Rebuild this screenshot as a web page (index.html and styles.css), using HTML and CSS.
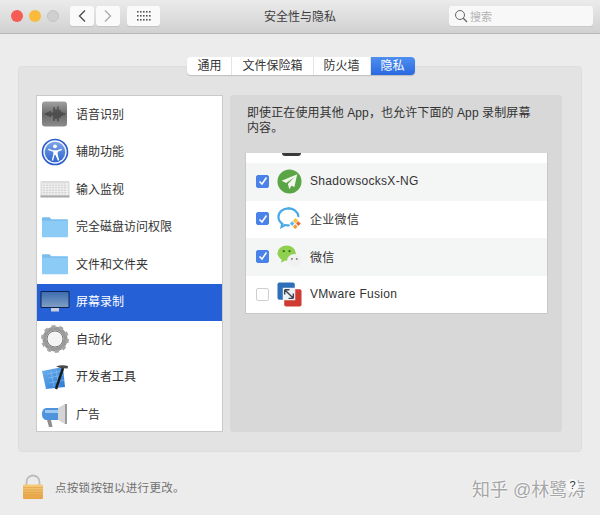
FILE: index.html
```html
<!DOCTYPE html>
<html lang="zh">
<head>
<meta charset="utf-8">
<title>安全性与隐私</title>
<link rel="stylesheet" href="styles.css">
</head>
<body>
<div class="window">
  <header class="titlebar">
    <div class="lights">
      <span class="light red"></span><span class="light yellow"></span><span class="light grey"></span>
    </div>
    <div class="navgroup">
      <button class="tbtn nav"><svg width="10" height="14" viewBox="0 0 10 14"><path d="M8 1.500 2.500 7 8 12.500" fill="none" stroke="#4a4a4a" stroke-width="1.300"/></svg></button>
      <button class="tbtn nav"><svg width="10" height="14" viewBox="0 0 10 14"><path d="M2 1.500 7.500 7 2 12.500" fill="none" stroke="#a8a8a8" stroke-width="1.300"/></svg></button>
    </div>
    <button class="tbtn grid"><svg width="14" height="10" viewBox="0 0 14 10"><g fill="#555"><rect x="0" y="0" width="1.600" height="1.600"/><rect x="3" y="0" width="1.600" height="1.600"/><rect x="6" y="0" width="1.600" height="1.600"/><rect x="9" y="0" width="1.600" height="1.600"/><rect x="12" y="0" width="1.600" height="1.600"/><rect x="0" y="4" width="1.600" height="1.600"/><rect x="3" y="4" width="1.600" height="1.600"/><rect x="6" y="4" width="1.600" height="1.600"/><rect x="9" y="4" width="1.600" height="1.600"/><rect x="12" y="4" width="1.600" height="1.600"/><rect x="0" y="8" width="1.600" height="1.600"/><rect x="3" y="8" width="1.600" height="1.600"/><rect x="6" y="8" width="1.600" height="1.600"/><rect x="9" y="8" width="1.600" height="1.600"/><rect x="12" y="8" width="1.600" height="1.600"/></g></svg></button>
    <div class="title">安全性与隐私</div>
    <div class="search">
      <svg width="14" height="14" viewBox="0 0 14 14"><circle cx="6" cy="6" r="4.500" fill="none" stroke="#666" stroke-width="1"/><path d="M9.300 9.300 13 13" stroke="#666" stroke-width="1.300"/></svg>
      <span>搜索</span>
    </div>
  </header>

  <main class="content">
    <nav class="tabs">
      <span class="tab">通用</span><span class="tab">文件保险箱</span><span class="tab">防火墙</span><span class="tab active">隐私</span>
    </nav>
    <section class="panel">
      <ul class="sidebar">
        <li class="side-row">
          <svg class="side-icon" viewBox="0 0 30 28"><defs><linearGradient id="sp" x1="0" y1="0" x2="0" y2="1"><stop offset="0" stop-color="#a2a2a2"/><stop offset=".5" stop-color="#6a6a6a"/><stop offset="1" stop-color="#8c8c8c"/></linearGradient></defs><rect x="2" y="1.500" width="25" height="25" rx="3" fill="url(#sp)"/><path d="M6 13v2M8 12v4M10 11v6M12 12.500v3M14 7v14M16 9v10M18 6.500v15M20 10v8M22 12v4M24 13v2" stroke="#222" stroke-width=".8" fill="none"/></svg>
          <span class="side-label">语音识别</span>
        </li>
        <li class="side-row">
          <svg class="side-icon" viewBox="0 0 28 28"><defs><linearGradient id="ac" x1="0" y1="0" x2="0" y2="1"><stop offset="0" stop-color="#7ea6e8"/><stop offset="1" stop-color="#2f63cf"/></linearGradient></defs><circle cx="14" cy="14" r="13.300" fill="#2a5ccb"/><circle cx="14" cy="14" r="11.700" fill="#f2f5fb"/><circle cx="14" cy="14" r="10.300" fill="url(#ac)"/><circle cx="14" cy="8.300" r="1.900" fill="#fff"/><path d="M7.500 10.800 12 12.200h4l4.500-1.400.4 1.200-4.200 1.700v3l1.600 5.600-1.400.4L14.500 17h-1l-1.400 5.700-1.400-.4 1.600-5.600v-3L7.100 12z" fill="#fff"/></svg>
          <span class="side-label">辅助功能</span>
        </li>
        <li class="side-row">
          <svg class="side-icon" viewBox="0 0 30 28"><rect x="0.500" y="6" width="29" height="16" rx="1" fill="#dcdcdc"/><rect x="0.500" y="20.500" width="29" height="2" fill="#a9a9a9"/><path d="M2 9h26M2 11.500h26M2 14h26M2 16.500h26M2 19h26" stroke="#f7f7f7" stroke-width="1.600"/><path d="M4 8v12M7 8v12M10 8v12M13 8v12M16 8v12M19 8v12M22 8v12M25 8v12" stroke="#bdbdbd" stroke-width=".5"/></svg>
          <span class="side-label">输入监视</span>
        </li>
        <li class="side-row">
          <svg class="side-icon" viewBox="0 0 28 28"><path d="M1 5.500c0-.8.400-1.200 1.200-1.200h6.300l1.800 2h15.500c.8 0 1.200.4 1.200 1.200V8H1z" fill="#79bdee"/><path d="M1 7.800h26v15.500c0 .6-.4 1-1 1H2c-.6 0-1-.4-1-1z" fill="#8ccbf5"/></svg>
          <span class="side-label">完全磁盘访问权限</span>
        </li>
        <li class="side-row">
          <svg class="side-icon" viewBox="0 0 28 28"><path d="M1 5.500c0-.8.400-1.200 1.200-1.200h6.300l1.800 2h15.500c.8 0 1.200.4 1.200 1.200V8H1z" fill="#79bdee"/><path d="M1 7.800h26v15.500c0 .6-.4 1-1 1H2c-.6 0-1-.4-1-1z" fill="#8ccbf5"/></svg>
          <span class="side-label">文件和文件夹</span>
        </li>
        <li class="side-row selected">
          <svg class="side-icon" viewBox="0 0 30 28"><defs><linearGradient id="sc" x1="0" y1="0" x2="0" y2="1"><stop offset="0" stop-color="#3e6db0"/><stop offset="1" stop-color="#7e9ec4"/></linearGradient></defs><rect x="0.500" y="3" width="29" height="17" rx="1" fill="#10244d"/><rect x="1.500" y="4" width="27" height="15" fill="url(#sc)"/><rect x="11" y="20" width="8" height="3.500" fill="#c5cfde"/></svg>
          <span class="side-label">屏幕录制</span>
        </li>
        <li class="side-row">
          <svg class="side-icon" viewBox="0 0 28 28"><circle cx="14" cy="14" r="10.500" fill="none" stroke="#999" stroke-width="4"/><circle cx="14" cy="14" r="12.500" fill="none" stroke="#a6a6a6" stroke-width="3" stroke-dasharray="3.900 3.960"/><circle cx="14" cy="14" r="8" fill="#f4f4f4" stroke="#777" stroke-width="1"/></svg>
          <span class="side-label">自动化</span>
        </li>
        <li class="side-row">
          <svg class="side-icon" viewBox="0 0 28 28"><defs><linearGradient id="xc" x1="0" y1="0" x2="1" y2="1"><stop offset="0" stop-color="#6fb4ee"/><stop offset="1" stop-color="#2b78d4"/></linearGradient></defs><path d="M1 8 22 4 24 24 5 26z" fill="url(#xc)"/><path d="M6 11 21 8M7 15 22 12M8 20 23 17M10 8 13 24M15 7 18 24" stroke="#9ccdf3" stroke-width=".5"/><path d="M22 5 15 26" stroke="#1b1b1b" stroke-width="2.400"/><path d="M15 3.500C19 2 23 2 27 3l-.4 2.500-7-.6z" fill="#4a4a4a"/></svg>
          <span class="side-label">开发者工具</span>
        </li>
        <li class="side-row">
          <svg class="side-icon" viewBox="0 0 28 28"><path d="M6 20l2 7h3.500L10 20z" fill="#8d8d8d"/><path d="M17 8 24 4v20l-7-4z" fill="#d4d4d4"/><path d="M24 4h2v20h-2z" fill="#9a9a9a"/><path d="M17 8H6c-3 0-5 2-5 6s2 6 5 6h11z" fill="#4e93dc"/><path d="M4 10h13v3H4z" fill="#9dc8ef"/></svg>
          <span class="side-label">广告</span>
        </li>
      </ul>

      <div class="detail">
        <p class="desc">即使正在使用其他 App，也允许下面的 App 录制屏幕内容。</p>
        <ul class="apps">
          <li class="app-clip"><span class="clip-mark"></span></li>
          <li class="app-row alt">
            <span class="check on"><svg width="10" height="10" viewBox="0 0 10 10"><path d="M1.500 5.500 4 8l4.500-6.500" fill="none" stroke="#fff" stroke-width="1.500"/></svg></span>
            <svg class="app-icon" viewBox="0 0 26 26"><circle cx="13" cy="13" r="12.500" fill="#5aa546"/><path d="M21 5.500 4.800 12.300l4.700 2.300L18 8.500l-6.700 7.200 1.500 5.300 2.300-3.600 3 1.300z" fill="#f2f8ee"/></svg>
            <span class="app-name">ShadowsocksX-NG</span>
          </li>
          <li class="app-row">
            <span class="check on"><svg width="10" height="10" viewBox="0 0 10 10"><path d="M1.500 5.500 4 8l4.500-6.500" fill="none" stroke="#fff" stroke-width="1.500"/></svg></span>
            <svg class="app-icon" viewBox="0 0 26 26"><path d="M12 2.500C6 2.500 1.500 6.500 1.500 11.500c0 3 1.600 5.400 4 7l-.8 3.300 3.800-2c1.200.4 2.400.5 3.700.4" fill="none" stroke="#47a9e6" stroke-width="2.300" stroke-linecap="round"/><path d="M12 2.500c5.500 0 9.500 3.500 10.200 8" fill="none" stroke="#47a9e6" stroke-width="2.300" stroke-linecap="round"/><rect x="17.300" y="13.300" width="4" height="4" transform="rotate(45 19.300 15.300)" fill="#f5c542"/><rect x="20.500" y="16.500" width="3.500" height="3.500" transform="rotate(45 22.250 18.250)" fill="#e8673a"/><rect x="14" y="16.500" width="3.500" height="3.500" transform="rotate(45 15.750 18.250)" fill="#5fb8e8"/><rect x="17.300" y="19.800" width="3.500" height="3.500" transform="rotate(45 19 21.500)" fill="#f09a3a"/></svg>
            <span class="app-name">企业微信</span>
          </li>
          <li class="app-row alt">
            <span class="check on"><svg width="10" height="10" viewBox="0 0 10 10"><path d="M1.500 5.500 4 8l4.500-6.500" fill="none" stroke="#fff" stroke-width="1.500"/></svg></span>
            <svg class="app-icon" viewBox="0 0 26 26"><ellipse cx="10" cy="9.500" rx="9.500" ry="8" fill="#8fd14f"/><path d="M5 15.500 4.300 19.500l4.500-2.700z" fill="#8fd14f"/><circle cx="7" cy="7.500" r="1.200" fill="#3f6b1c"/><circle cx="13" cy="7.500" r="1.200" fill="#3f6b1c"/><ellipse cx="18" cy="17" rx="7.500" ry="6.500" fill="#f1f1f1"/><path d="M21 22l2 2.500-.2-4z" fill="#f1f1f1"/><circle cx="15.500" cy="15.500" r="1" fill="#777"/><circle cx="20.500" cy="15.500" r="1" fill="#777"/></svg>
            <span class="app-name">微信</span>
          </li>
          <li class="app-row">
            <span class="check"></span>
            <svg class="app-icon" viewBox="0 0 26 26"><rect x="0.500" y="0.500" width="18" height="18" rx="2" fill="#2e6fb8"/><rect x="7.500" y="7.500" width="18" height="18" rx="2" fill="#cf3a32"/><rect x="6" y="6" width="13" height="13" fill="#eef1f5"/><path d="M8 8l9 9M8 8h5M8 8v5M17 17h-5M17 17v-5" stroke="#3f4652" stroke-width="1.500" fill="none"/></svg>
            <span class="app-name">VMware Fusion</span>
          </li>
        </ul>
      </div>
    </section>
    <footer class="footer">
      <svg class="lock" width="20" height="26" viewBox="0 0 20 26"><defs><linearGradient id="lk" x1="0" y1="0" x2="0" y2="1"><stop offset="0" stop-color="#f5cd7c"/><stop offset="1" stop-color="#e8a243"/></linearGradient></defs><path d="M3.500 11V8a6.500 6.500 0 0 1 13 0v3" fill="none" stroke="#bdbdbd" stroke-width="1.800"/><rect x="0" y="10.500" width="20" height="14.500" rx="1" fill="url(#lk)"/><path d="M0 13.500h20M0 16h20M0 18.500h20M0 21h20" stroke="#dd9f45" stroke-width=".6"/></svg>
      <span class="lock-text">点按锁按钮以进行更改。</span>
    </footer>
    <div class="watermark">知乎 @林鹭涛</div>
    <div class="help">?</div>
  </main>
</div>
</body>
</html>
```

FILE: styles.css
```css
* { box-sizing: border-box; }
html, body { margin: 0; padding: 0; }
body {
  width: 600px;
  height: 515px;
  overflow: hidden;
  font-family: "Liberation Sans", "Noto Sans CJK SC", sans-serif;
  font-size: 12px;
  color: #3a3a3a;
  background: #ececec;
}
ul { list-style: none; margin: 0; padding: 0; }
p { margin: 0; }

.window { display: flex; flex-direction: column; height: 515px; }

.titlebar {
  height: 34px;
  flex: none;
  display: flex;
  align-items: center;
  padding: 0 7px 1px 11px;
  background: linear-gradient(#ebebeb, #d1d1d1);
  border-bottom: 1px solid #b8b8b8;
  position: relative;
}
.lights { display: flex; gap: 6px; margin-right: 11px; }
.light { width: 12px; height: 12px; border-radius: 50%; }
.red { background: #f45c54; }
.yellow { background: #f8bb3b; }
.grey { background: #cfcfcf; border: 1px solid #c4c4c4; }

.navgroup { display: flex; gap: 2px; margin-right: 7px; }
.tbtn {
  height: 20px;
  border: 0;
  padding: 0;
  border-radius: 3px;
  background: #fafafa;
  box-shadow: 0 1px 0 #c4c4c4;
  display: flex;
  align-items: center;
  justify-content: center;
}
.nav { width: 24px; }
.grid { width: 33px; }
.title {
  position: absolute;
  left: 264px;
  top: 8px;
  font-size: 12px;
  line-height: 18px;
  color: #3e3e3e;
}
.search {
  margin-left: auto;
  width: 144px;
  height: 20px;
  background: #f8f8f8;
  border-radius: 3px;
  box-shadow: 0 1px 0 #c9c9c9;
  display: flex;
  align-items: center;
  gap: 2px;
  padding-left: 5px;
  font-size: 11px;
  color: #b4b4b4;
}

.content {
  flex: 1;
  position: relative;
  padding: 23px 18px 0;
  display: flex;
  flex-direction: column;
}
.tabs {
  display: flex;
  align-self: center;
  height: 18px;
  margin-bottom: -9px;
  margin-left: 2px;
  position: relative;
  z-index: 1;
  border-radius: 4px;
  background: #fff;
  box-shadow: 0 1px 1px #bdbdbd;
}
.tab {
  line-height: 18px;
  padding: 0 10px;
  color: #333;
  border-right: 1px solid #e4e4e4;
}
.tab.active {
  background: linear-gradient(#4f8ff0, #2a69e0);
  color: #fff;
  border-right: 0;
  border-radius: 0 4px 4px 0;
}

.panel {
  height: 386px;
  background: #e3e3e3;
  border: 1px solid #dedede;
  border-radius: 4px;
  padding: 28px 19px 19px 17px;
  display: flex;
  gap: 7px;
}
.sidebar {
  width: 187px;
  background: #fff;
  border: 1px solid #c9c9c9;
  flex: none;
}
.side-row {
  height: 37.5px;
  display: flex;
  align-items: center;
  gap: 6px;
  padding: 0 0 1px 3px;
  color: #333;
}
.side-icon { width: 30px; height: 28px; flex: none; }
.side-label { padding-bottom: 2px; }
.selected { background: #2560d7; color: #fff; }

.detail {
  flex: 1;
  background: #d8d8d8;
  border-radius: 3px;
  padding: 11px 14px 0 15px;
}
.desc { line-height: 15px; width: 290px; padding-left: 2px; color: #333; margin-bottom: 17px; letter-spacing: .1px; }
.apps {
  background: #fff;
  border: 1px solid #c8c8c8;
  border-top: 0;
  width: 303px;
  height: 161px;
}
.app-clip { height: 10px; overflow: hidden; display: flex; padding-left: 36px; }
.clip-mark { width: 19px; height: 3px; background: #3a3a3a; border-radius: 0 0 9px 9px; }
.app-row {
  height: 37.6px;
  display: flex;
  align-items: center;
  padding: 0 0 1px 10px;
}
.alt { background: #f4f5f5; }
.check {
  width: 13px;
  height: 13px;
  border-radius: 2px;
  background: #fff;
  border: 1px solid #cfcfcf;
  flex: none;
  margin-right: 8px;
  display: flex;
  align-items: center;
  justify-content: center;
}
.check.on { background: #4a82ea; border-color: #4a82ea; }
.app-icon { width: 25px; height: 25px; flex: none; margin-right: 8px; }
.app-name { letter-spacing: 0.3px; color: #333; }

.footer {
  display: flex;
  align-items: center;
  height: 26px;
  margin-top: 22px;
  margin-left: 5px;
  gap: 12px;
}
.lock { flex: none; }
.lock-text { color: #707070; font-size: 11.500px; letter-spacing: .3px; }

.help {
  position: absolute;
  right: 21px;
  bottom: 23px;
  width: 13px;
  height: 13px;
  border-radius: 50%;
  background: #f8f8f8;
  text-align: center;
  line-height: 13px;
  color: #333;
  font-size: 11px;
}
.watermark {
  position: absolute;
  left: 472px;
  bottom: 14px;
  font-size: 18px;
  line-height: 22px;
  color: #a6a6a6;
  text-shadow: 0 0 2px #fff, 0 0 2px #fff;
}
```
